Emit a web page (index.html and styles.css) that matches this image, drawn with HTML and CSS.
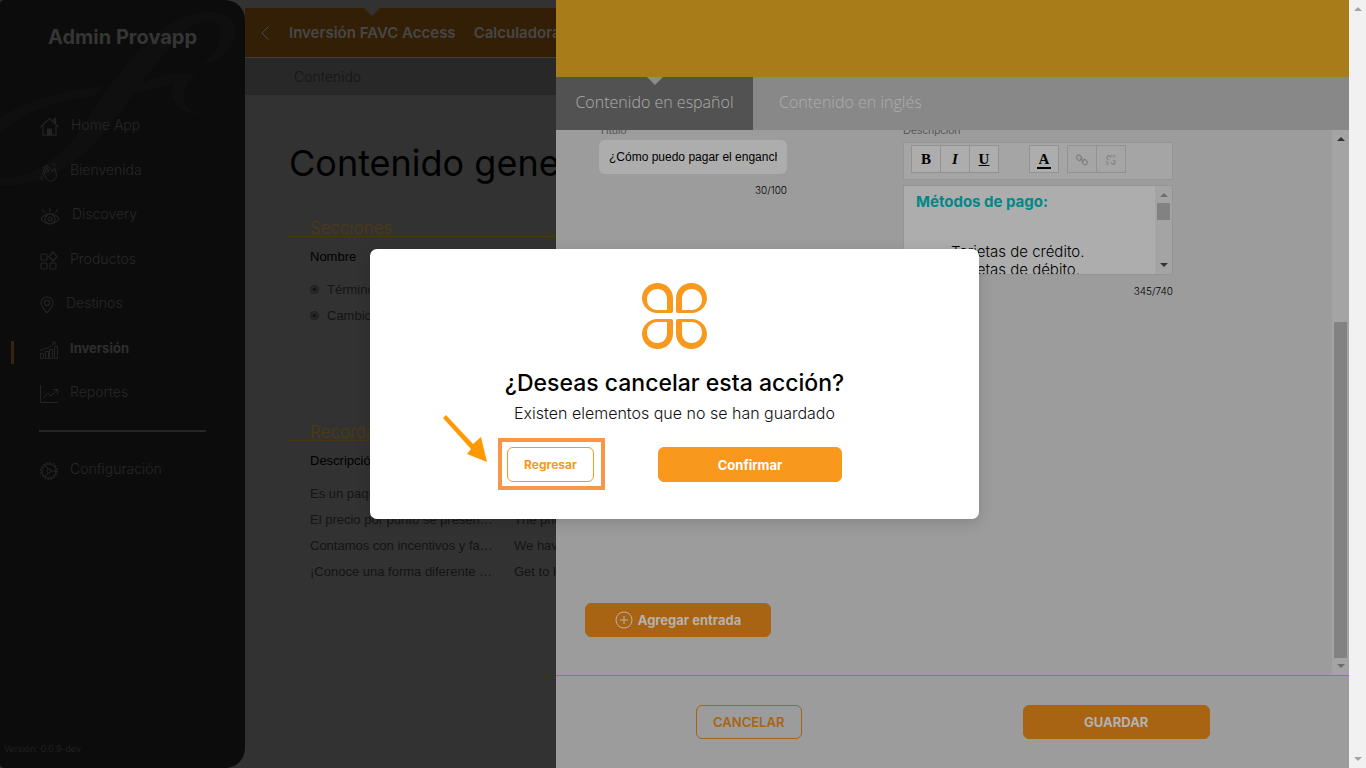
FILE: index.html
```html
<!DOCTYPE html>
<html lang="es">
<head>
    <meta charset="UTF-8">
    <meta name="viewport" content="width=device-width, initial-scale=1.0">
    <title>Admin Provapp</title>
    <link rel="stylesheet" href="styles.css">
</head>
<body>

<div class="app">
    <!-- Menú lateral -->
    <aside class="sidebar">
        <svg class="swash" viewBox="0 0 245 200" fill="#0f0f0f">
            <path d="M0 178C40 178 68 150 88 118C112 80 140 45 170 24C185 14 200 12 213 12C232 13 240 26 234 40C228 56 216 63 200 64C216 56 222 42 220 28C216 12 192 22 176 40C150 70 130 100 108 128C78 165 42 188 0 185Z"/>
            <path d="M0 118C30 98 62 91 103 86L94 97C54 99 22 114 0 134Z"/>
            <path d="M140 84C160 74 180 70 198 77C188 78 184 86 184 96C185 108 192 113 202 114C208 112 211 107 213 99C214 112 200 117 188 113C174 108 168 92 174 83C162 86 150 90 134 94Z"/>
        </svg>
        <div class="brand">Admin Provapp</div>
        <nav class="menu">
            <a href="#">
                <svg width="19" height="20" viewBox="0 0 19 20" fill="none" stroke="currentColor" stroke-width="1.2"><path d="M.5 10 9.500 1.500 18.500 10M3 9v9h13V9M14 5V1.500h1.500V7"/><path d="M7.500 18v-6h4v6z" fill="currentColor"/></svg>
                Home App
            </a>
            <a href="#">
                <svg width="18" height="20" viewBox="0 0 18 20" fill="none" stroke="currentColor" stroke-linejoin="round"><path d="M6 16 2.500 11.500l1-1 2 2L3 8.500l1-1 3 3.500-3.500-6 1-1L9 9.500 6 4l1-1 6 7 .5-3 1.500-.5 1 4c1 4 0 6-2 7.500-3 2-6 1-8-2Z"/><path d="m12 1.500 1.500 2M14 1l1.500 2.500M1 14.500 3 17M.5 17l2 1.500"/></svg>
                Bienvenida
            </a>
            <a href="#">
                <svg width="20" height="20" viewBox="0 0 20 20" fill="none" stroke="currentColor" stroke-width="1.2"><path d="M1 13C5 6 15 6 19 13C15 19 5 19 1 13Z"/><circle cx="10" cy="13" r="5"/><circle cx="10" cy="13" r="2"/><path d="M10 2v4M2.500 3.500l2 3M17.500 3.500l-2 3"/></svg>
                Discovery
            </a>
            <a href="#">
                <svg width="18" height="20" viewBox="0 0 18 20" fill="none" stroke="currentColor" stroke-width="1.2"><rect x="1" y="3" width="6" height="6" rx="1"/><rect x="1" y="12" width="6" height="6" rx="1"/><rect x="10" y="12" width="6" height="6" rx="1"/><path d="m13 1 4 4.500-4 4.500-4-4.500z"/></svg>
                Productos
            </a>
            <a href="#">
                <svg width="14" height="20" viewBox="0 0 14 20" fill="none" stroke="currentColor" stroke-width="1.200"><path d="M7 18C3 13 1 11 1 8a6 6 0 0 1 12 0c0 3-2 5-6 10Z"/><circle cx="7" cy="8" r="2.600"/></svg>
                Destinos
            </a>
            <a href="#" class="active">
                <svg width="18" height="20" viewBox="0 0 18 20" fill="none" stroke="currentColor"><path d="M.5 18.500v-5h3v5zM5.500 18.500v-7h3v7zM9.500 18.500v-9h3v9zM14.500 18.500v-12h3v12zM0 10C7 9 12 6 15 2M12 2h3v3"/></svg>
                Inversión
            </a>
            <a href="#">
                <svg width="18" height="20" viewBox="0 0 18 20" fill="none" stroke="currentColor"><path d="M.5 1v17.500H18M3 14l5-5 3 3 6-6M13 5.500h4.500V10"/></svg>
                Reportes
            </a>
        </nav>
        <hr>
        <nav class="menu-bottom">
            <a href="#">
                <svg width="18" height="20" viewBox="0 0 18 20" fill="none" stroke="currentColor"><circle cx="9" cy="10" r="7"/><circle cx="9" cy="10" r="8" stroke-width="2" stroke-dasharray="1.600 1.540"/><circle cx="9" cy="10" r="2"/><path d="M11 10h5M8 8 5 4M8 12l-3 4"/></svg>
                Configuración
            </a>
        </nav>
        <div class="version">Versión: 0.0.9-dev</div>
    </aside>

    <!-- Página de inversión -->
    <main class="page">
        <div class="topbar">
            <svg width="8" height="14" viewBox="0 0 8 14" fill="none" stroke="currentColor"><path d="M7.500.5 1 7l6.500 6.500"/></svg>
            <a href="#" class="current">Inversión FAVC Access</a>
            <a href="#">Calculadora</a>
        </div>
        <div class="subbar"><a href="#">Contenido</a></div>
        <h1>Contenido general</h1>

        <section>
            <h2>Secciones</h2>
            <table>
                <thead><tr><th>Nombre</th></tr></thead>
                <tbody>
                    <tr><td><span class="dot"></span>Términos</td></tr>
                    <tr><td><span class="dot"></span>Cambios</td></tr>
                </tbody>
            </table>
        </section>

        <section class="reminders">
            <h2>Recordatorios</h2>
            <table>
                <thead><tr><th>Descripción</th><th></th></tr></thead>
                <tbody>
                    <tr><td>Es un paquete</td><td></td></tr>
                    <tr><td>El precio por punto se presen…</td><td>The price</td></tr>
                    <tr><td>Contamos con incentivos y fa…</td><td>We have</td></tr>
                    <tr><td>¡Conoce una forma diferente …</td><td>Get to know</td></tr>
                </tbody>
            </table>
        </section>
    </main>

    <!-- Panel de edición -->
    <div class="drawer">
        <div class="drawer-head"></div>
        <div class="tabs">
            <button type="button" class="tab selected">Contenido en español</button>
            <button type="button" class="tab">Contenido en inglés</button>
        </div>
        <div class="drawer-body">
            <div class="form">
                <div class="fields">
                    <div class="field">
                        <label for="titulo">Título</label>
                        <input type="text" id="titulo" value="¿Cómo puedo pagar el enganche?">
                        <span class="count">30/100</span>
                    </div>
                    <div class="field wide">
                        <label id="descLabel">Descripción</label>
                        <div class="toolbar">
                            <button type="button"><b>B</b></button>
                            <button type="button"><i>I</i></button>
                            <button type="button"><u>U</u></button>
                            <button type="button" class="color"><span>A</span></button>
                            <button type="button" class="off link" aria-label="Enlazar"><svg width="12" height="12" viewBox="0 0 14 14" fill="none" stroke="currentColor" stroke-width="1.500"><rect x="1" y="2" width="6" height="5" rx="2" transform="rotate(45 4 4)"/><rect x="7" y="7" width="6" height="5" rx="2" transform="rotate(45 10 10)"/><path d="m5 5 4 4"/></svg></button>
                            <button type="button" class="off" aria-label="Quitar enlace"><svg width="12" height="12" viewBox="0 0 14 14" fill="none" stroke="currentColor" stroke-width="1.300"><path d="M7 4 5.500 2.500C4 1 1 3.500 2.500 5.500L4 7M7 10l1.500 1.500c1.500 1.500 4.500-1 3-3L10 7M8 1v2M12 1.500 10 4M1 9h2M2 12.500 4 10"/></svg></button>
                        </div>
                        <div class="editor">
                            <div class="editor-text" contenteditable="true" role="textbox" aria-labelledby="descLabel">
                                <strong>Métodos de pago:</strong>
                                <ul>
                                    <li>Tarjetas de crédito.</li>
                                    <li>Tarjetas de débito.</li>
                                </ul>
                            </div>
                            <div class="scroll editor-scroll">
                                <span class="up"></span><span class="thumb"></span><span class="down"></span>
                            </div>
                        </div>
                        <span class="count">345/740</span>
                    </div>
                </div>
                <button type="button" class="btn add">
                    <svg width="18" height="18" viewBox="0 0 18 18" fill="none" stroke="currentColor"><circle cx="9" cy="9" r="8"/><path d="M9 5v8M5 9h8"/></svg>
                    Agregar entrada
                </button>
            </div>
            <div class="scroll drawer-scroll">
                <span class="up"></span><span class="thumb"></span><span class="down"></span>
            </div>
        </div>
        <div class="drawer-foot">
            <button type="button" class="btn cancel">CANCELAR</button>
            <button type="button" class="btn save">GUARDAR</button>
        </div>
    </div>

    <!-- Modal de confirmación -->
    <div class="overlay">
        <div class="modal" role="dialog" aria-labelledby="modalTitle">
            <svg class="logo" width="65" height="66" viewBox="0 0 65 66" fill="#f8981d" fill-rule="evenodd">
                <defs><path id="petal" d="M15.500 0C24.500 0 31 6.700 31 15.500V28a2 2 0 0 1-2 2H15.500C7 30 0 23.300 0 15S7 0 15.500 0ZM15.500 6C9.500 6 5 10.500 5 16.500S9.500 27 15.500 27H25V16C25 10 21 6 15.500 6Z"/></defs>
                <use href="#petal"/>
                <use href="#petal" transform="translate(65 0) scale(-1 1)"/>
                <use href="#petal" transform="translate(0 66) scale(1 -1)"/>
                <use href="#petal" transform="translate(65 66) scale(-1 -1)"/>
            </svg>
            <h3 id="modalTitle">¿Deseas cancelar esta acción?</h3>
            <p>Existen elementos que no se han guardado</p>
            <div class="actions">
                <div class="marked">
                    <button type="button" class="btn back">Regresar</button>
                    <svg class="arrow" width="46" height="48" viewBox="0 0 46 48" fill="#ff9900"><path d="m3 0 27 29 8-7 6 25-20-8 4-5L0 3z"/></svg>
                </div>
                <button type="button" class="btn confirm">Confirmar</button>
            </div>
        </div>
    </div>
</div>

<!-- Barra de desplazamiento de la página -->
<div class="scroll page-scroll"><span class="up"></span><span class="down"></span></div>

</body>
</html>
```
FILE: styles.css
```css
* {
    box-sizing: border-box;
}

body {
    margin: 0;
    height: 100vh;
    display: flex;
    overflow: hidden;
    background: #323232;
    font-family: Inter, 'Liberation Sans', sans-serif;
    font-size: 13px;
}

a {
    color: inherit;
    text-decoration: none;
}

button {
    font-family: inherit;
    cursor: pointer;
}

.app {
    flex: 1;
    min-width: 0;
    display: flex;
    position: relative;
}

/* Menú lateral */
.sidebar {
    position: relative;
    width: 245px;
    flex-shrink: 0;
    background: #0c0c0c;
    border-radius: 4px 20px 20px 4px;
    color: #272727;
    display: flex;
    flex-direction: column;
}

.swash {
    position: absolute;
    top: 0;
    left: 0;
    width: 100%;
}

.brand {
    position: relative;
    margin-top: 25px;
    line-height: 24px;
    text-align: center;
    font-size: 20px;
    font-weight: 700;
    color: #353535;
}

.menu {
    position: relative;
    display: flex;
    flex-direction: column;
    justify-content: space-between;
    height: 291px;
    margin-top: 64px;
}

.menu a,
.menu-bottom a {
    position: relative;
    display: flex;
    gap: 12px;
    height: 24px;
    padding-left: 40px;
    line-height: 24px;
    font-size: 14px;
    font-weight: 300;
}

.menu svg,
.menu-bottom svg {
    margin-top: 4px;
    color: #242424;
}

.menu .active {
    font-weight: 700;
    font-size: 13px;
    color: #2e2e2e;
}

.active::before {
    content: '';
    position: absolute;
    left: 11px;
    top: 5px;
    width: 3px;
    height: 23px;
    background: #3a2306;
}

.sidebar hr {
    width: 167px;
    margin: 26px 39px 25px;
    border: 0;
    border-top: 2px solid #262626;
}

.version {
    margin-top: auto;
    padding: 0 0 11px 4px;
    font-size: 9px;
    line-height: 16px;
    font-weight: 300;
}

/* Página */
.page {
    flex: 1;
    min-width: 0;
    padding-top: 8px;
}

.topbar {
    display: flex;
    align-items: center;
    gap: 18px;
    height: 50px;
    padding-left: 16px;
    background: #331f06;
    border-bottom: 1px solid #463e32;
    color: #474747;
    font-size: 15px;
    font-weight: 600;
    line-height: 49px;
}

.topbar svg {
    margin-right: 2px;
}

.current {
    position: relative;
}

.current::before,
.selected::before {
    content: '';
    position: absolute;
    top: 0;
    left: 50%;
    margin-left: -8px;
    border: 8px solid transparent;
    border-bottom: 0;
    border-top-color: #323232;
}

.subbar {
    height: 37px;
    line-height: 37px;
    padding-left: 49px;
    background: #282828;
    color: #151515;
    font-size: 14px;
    font-weight: 300;
}

h1 {
    margin: 48px 0 44px 44px;
    font-size: 36px;
    line-height: 40px;
    font-weight: 400;
    white-space: nowrap;
    color: #000;
}

section {
    margin-left: 44px;
}

.reminders {
    margin-top: 103px;
}

h2 {
    height: 20px;
    margin: -10px 0 0;
    padding-left: 21px;
    border-bottom: 1px solid #4d3709;
    font-size: 17px;
    line-height: 22px;
    font-weight: 300;
    color: #4e3b10;
}

table {
    margin: 6px 0 0 21px;
    border-collapse: collapse;
    table-layout: fixed;
    width: 408px;
    font-family: 'Liberation Sans', Arial, sans-serif;
    font-size: 13px;
}

th {
    height: 27px;
    padding: 0;
    text-align: left;
    font-weight: 400;
    color: #000;
}

td {
    height: 26px;
    padding: 0;
    white-space: nowrap;
    color: #141414;
}

thead::after {
    content: '';
    display: block;
    height: 6px;
}

.dot {
    display: inline-block;
    width: 9px;
    height: 9px;
    margin-right: 8px;
    border: 1px solid #1a1a1a;
    border-radius: 50%;
    background: radial-gradient(circle, #161616 35%, #2c2c2c 50%);
}

/* Panel de edición */
.drawer {
    position: absolute;
    top: 0;
    bottom: 0;
    left: 556px;
    right: 0;
    display: flex;
    flex-direction: column;
    background: #9c9c9c;
}

.drawer-head {
    height: 77px;
    background: #a87c18;
}

.tabs {
    display: flex;
    height: 53px;
    background: #888;
}

.tab {
    position: relative;
    padding: 0 26px 3px;
    border: 0;
    background: none;
    color: #adadad;
    font-family: 'Open Sans', sans-serif;
    font-size: 16px;
    font-weight: 300;
}

.tab.selected {
    padding: 0 0 3px;
    width: 197px;
    background: #525252;
}

.selected::before {
    border-top-color: #8c8c8c;
}

.drawer-body {
    flex: 1;
    min-height: 0;
    display: flex;
    overflow: hidden;
}

.form {
    flex: 1;
    display: flex;
    flex-direction: column;
    justify-content: space-between;
    align-items: flex-start;
    padding: 0 0 38px 29px;
}

.fields {
    display: flex;
    gap: 116px;
    margin: -7px 0 0 14px;
}

.field {
    width: 188px;
    display: flex;
    flex-direction: column;
}

.field.wide {
    width: 270px;
}

.field label {
    height: 17px;
    line-height: 15px;
    font-family: 'Liberation Sans', Arial, sans-serif;
    font-size: 11px;
    color: #555;
}

.field input {
    height: 34px;
    padding: 0 10px;
    border: 0;
    border-radius: 6px;
    background: #adadad;
    font-family: 'Liberation Sans', Arial, sans-serif;
    font-size: 12px;
    color: #000;
}

.count {
    margin-top: 7px;
    text-align: right;
    font-size: 10px;
    line-height: 18px;
    font-weight: 300;
}

.toolbar {
    display: flex;
    height: 38px;
    margin-top: 2px;
    padding: 2px 7px;
    border: 1px solid #959595;
    background: #a5a5a5;
}

.toolbar button {
    width: 30px;
    height: 28px;
    margin-right: -1px;
    padding: 0;
    border: 1px solid #929292;
    background: #adadad;
    font-family: 'Liberation Serif', serif;
    font-size: 15px;
    font-weight: 700;
    color: #000;
}

.toolbar .color {
    margin-left: 31px;
}

.color span {
    border-bottom: 2px solid #000;
    padding: 0 2px;
}

.toolbar .link {
    margin-left: 9px;
}

.toolbar .off {
    background: #a5a5a5;
    color: #808080;
}

.toolbar svg {
    vertical-align: middle;
}

.editor {
    display: flex;
    height: 90px;
    margin-top: 5px;
    border: 1px solid #959595;
    background: #adadad;
    overflow: hidden;
}

.editor-text {
    flex: 1;
    padding: 7px 12px;
    font-size: 15px;
    line-height: 18px;
    font-weight: 300;
    color: #000;
}

.editor-text strong {
    color: #088;
    font-weight: 700;
}

.editor-text ul {
    margin: 32px 0 0;
    padding-left: 35px;
    list-style: none;
}

/* Barras de desplazamiento */
.scroll {
    flex-shrink: 0;
    width: 17px;
    display: flex;
    flex-direction: column;
    align-items: center;
    padding: 7px 0;
    background: #a4a4a4;
}

.up,
.down {
    border: 4px solid transparent;
}

.up {
    border-top: 0;
    border-bottom-color: #333;
}

.down {
    margin-top: auto;
    border-bottom: 0;
    border-top-color: #333;
}

.thumb {
    width: 13px;
    background: #828282;
}

.editor-scroll .up {
    border-bottom-color: #707070;
}

.editor-scroll .thumb {
    height: 17px;
    margin-top: 6px;
}

.drawer-scroll .thumb {
    height: 336px;
    margin-top: auto;
}

.drawer-scroll .down {
    margin-top: 6px;
    border-top-color: #6b6b6b;
}

.page-scroll {
    background: #f1f1f1;
}

.page-scroll .up {
    border-bottom-color: #a3a3a3;
}

.page-scroll .down {
    border-top-color: #a3a3a3;
}

/* Botones */
.btn {
    height: 34px;
    padding: 0;
    border: 1px solid #a86412;
    border-radius: 6px;
    background: #a86412;
    color: #b3b3b3;
    font-size: 13px;
    font-weight: 700;
}

.add {
    display: flex;
    align-items: center;
    justify-content: center;
    gap: 5px;
    width: 186px;
}

.drawer-foot {
    display: grid;
    grid-template-columns: 1fr 1fr;
    place-items: center;
    height: 93px;
    padding: 0 49px 0 9px;
    border-top: 1px solid #a87c18;
}

.cancel {
    width: 106px;
    background: none;
    color: #a86412;
    font-weight: 600;
}

.save {
    width: 187px;
}

/* Modal */
.overlay {
    position: absolute;
    inset: 0;
    display: flex;
    align-items: center;
    justify-content: center;
}

.modal {
    width: 609px;
    padding: 34px 0 37px;
    display: flex;
    flex-direction: column;
    align-items: center;
    border-radius: 7px;
    background: #fff;
    box-shadow: 0 4px 14px rgba(0, 0, 0, 0.15);
}

.modal h3 {
    margin: 20px 0 0;
    font-size: 23px;
    line-height: 28px;
    font-weight: 500;
    color: #000;
}

.modal p {
    margin: 6px 0 24px;
    font-size: 16px;
    line-height: 20px;
    font-weight: 300;
    color: #111;
}

.actions {
    display: flex;
    justify-content: space-between;
    width: 335px;
}

.actions .btn {
    height: 35px;
    border-color: #f8981d;
}

.marked {
    position: relative;
}

/* Marco que resalta el botón */
.marked::after {
    content: '';
    position: absolute;
    inset: -9px -11px -8px -9px;
    border: 4px solid #f79646;
    pointer-events: none;
}

.arrow {
    position: absolute;
    top: -32px;
    left: -64px;
}

.actions .back {
    width: 87px;
    background: #fff;
    color: #f8981d;
    font-size: 12px;
}

.actions .confirm {
    width: 184px;
    background: #f8981d;
    color: #fff;
}
```
